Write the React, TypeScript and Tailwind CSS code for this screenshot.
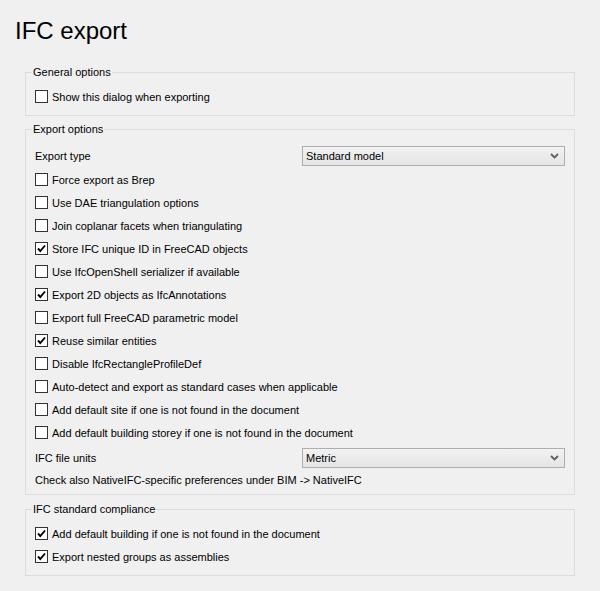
import React from "react";

const font = { fontFamily: '"Liberation Sans", Arial, sans-serif' };

function Check({ checked, label }: { checked?: boolean; label: string }) {
  return (
    <div className="flex items-center h-[23px]">
      <div className="w-[13px] h-[13px] border border-[#333333] bg-white flex items-center justify-center shrink-0">
        {checked && (
          <svg width="11" height="11" viewBox="0 0 11 11">
            <path d="M2 5.5 L4.3 8 L9 2.5" stroke="#000" strokeWidth="1.9" fill="none" />
          </svg>
        )}
      </div>
      <span className="ml-[4px] text-[11px] text-black leading-[14px]">{label}</span>
    </div>
  );
}

function Combo({ value }: { value: string }) {
  return (
    <div className="w-[263px] h-[20px] border border-[#adadad] bg-gradient-to-b from-[#f2f2f2] to-[#e5e5e5] flex items-center justify-between pl-[3px] pr-[5px]">
      <span className="text-[11px] text-black">{value}</span>
      <svg width="9" height="6" viewBox="0 0 9 6">
        <path d="M1 1 L4.5 4.5 L8 1" stroke="#606060" strokeWidth="1.8" fill="none" />
      </svg>
    </div>
  );
}

function Group({ title, children, className }: { title: string; children: React.ReactNode; className?: string }) {
  return (
    <fieldset className={"border border-[#dcdcdc] mx-[25px] w-[550px] pl-[9px] pr-[9px] " + (className || "")}>
      <legend className="-ml-[3px] px-[1px] text-[11px] leading-[14px] text-black">{title}</legend>
      {children}
    </fieldset>
  );
}

export default function App() {
  return (
    <div className="w-[600px] h-[591px] bg-[#f0f0f0] overflow-hidden" style={font}>
      <div className="pl-[15px] pt-[15px] h-[65px] text-[24px] leading-[32px] text-black">IFC export</div>
      <Group title="General options" className="pt-[6px] pb-[7px]">
        <Check label="Show this dialog when exporting" />
      </Group>
      <Group title="Export options" className="mt-[6px] pt-[8px] pb-[4px]">
        <div className="flex items-center justify-between h-[24px]">
          <span className="text-[11px]">Export type</span>
          <Combo value="Standard model" />
        </div>
        <Check label="Force export as Brep" />
        <Check label="Use DAE triangulation options" />
        <Check label="Join coplanar facets when triangulating" />
        <Check checked label="Store IFC unique ID in FreeCAD objects" />
        <Check label="Use IfcOpenShell serializer if available" />
        <Check checked label="Export 2D objects as IfcAnnotations" />
        <Check label="Export full FreeCAD parametric model" />
        <Check checked label="Reuse similar entities" />
        <Check label="Disable IfcRectangleProfileDef" />
        <Check label="Auto-detect and export as standard cases when applicable" />
        <Check label="Add default site if one is not found in the document" />
        <Check label="Add default building storey if one is not found in the document" />
        <div className="flex items-center justify-between h-[24px] mt-[2px]">
          <span className="text-[11px]">IFC file units</span>
          <Combo value="Metric" />
        </div>
        <div className="h-[20px] flex items-center text-[11px]">Check also NativeIFC-specific preferences under BIM -&gt; NativeIFC</div>
      </Group>
      <Group title="IFC standard compliance" className="mt-[7px] pt-[6px] pb-[7px]">
        <Check checked label="Add default building if one is not found in the document" />
        <Check checked label="Export nested groups as assemblies" />
      </Group>
    </div>
  );
}
